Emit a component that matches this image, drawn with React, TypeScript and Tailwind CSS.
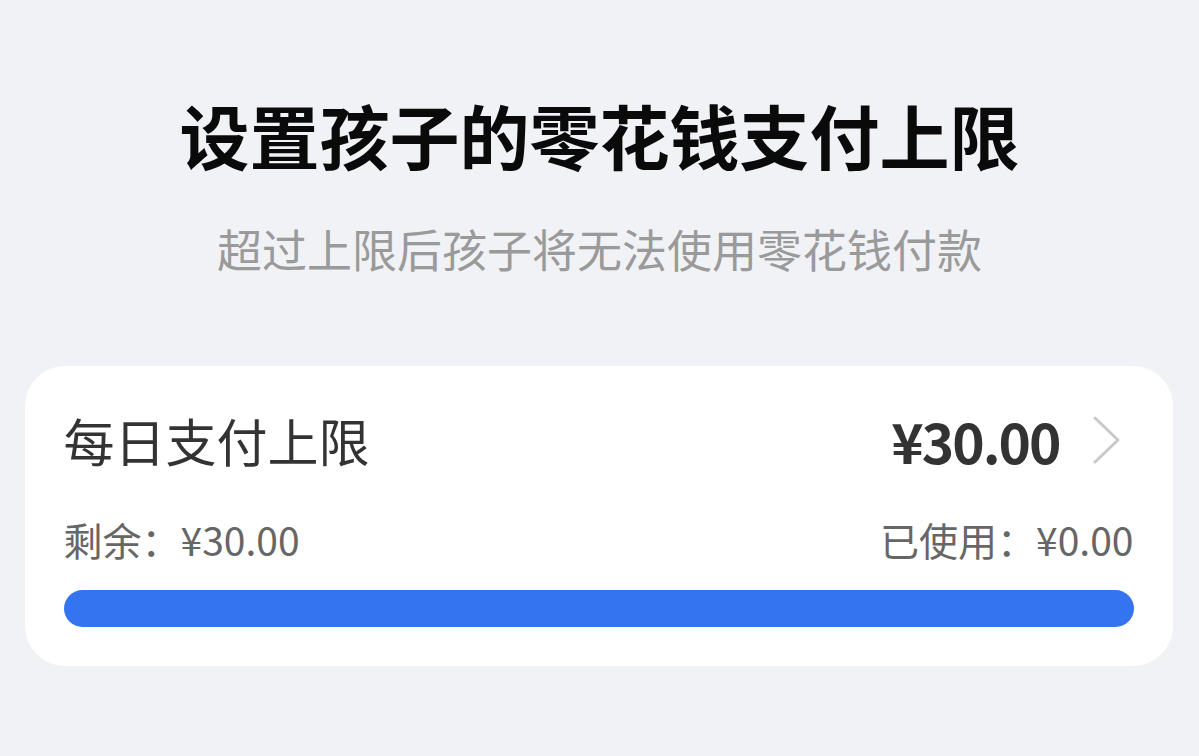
import React from "react";

export default function App() {
  const font = { fontFamily: '"Noto Sans CJK SC", "Noto Sans", sans-serif' };
  return (
    <div
      className="w-[1199px] h-[756px] bg-[#f1f2f6] overflow-hidden flex flex-col items-center"
      style={font}
    >
      <h1 className="mt-[100px] text-[70px] leading-none font-bold text-[#0a0a0a]">
        设置孩子的零花钱支付上限
      </h1>
      <p className="mt-[56px] text-[45px] leading-none text-[#9a9a9a]">
        超过上限后孩子将无法使用零花钱付款
      </p>
      <div className="mt-[95px] ml-[-2px] w-[1148px] rounded-[40px] bg-white px-[39px] pt-[48px] pb-[39px]">
        <div className="flex items-center justify-between h-[52px]">
          <span className="text-[51px] leading-none text-[#333333]">每日支付上限</span>
          <div className="flex items-center">
            <span className="text-[55px] leading-none font-bold text-[#333333] tracking-[-2px]">¥30.00</span>
            <svg
              width="30"
              height="48"
              viewBox="0 0 30 48"
              className="ml-[32px] mr-[12px]"
              fill="none"
            >
              <path
                d="M3 2 L26 24 L3 46"
                stroke="#c9c9c9"
                strokeWidth="3"
                strokeLinecap="round"
                strokeLinejoin="round"
              />
            </svg>
          </div>
        </div>
        <div className="mt-[54px] flex items-center justify-between text-[39px] leading-none text-[#666666]">
          <span>剩余：¥30.00</span>
          <span>已使用：¥0.00</span>
        </div>
        <div className="mt-[31px] h-[37px] w-full rounded-full bg-[#3574f0]" />
      </div>
    </div>
  );
}
